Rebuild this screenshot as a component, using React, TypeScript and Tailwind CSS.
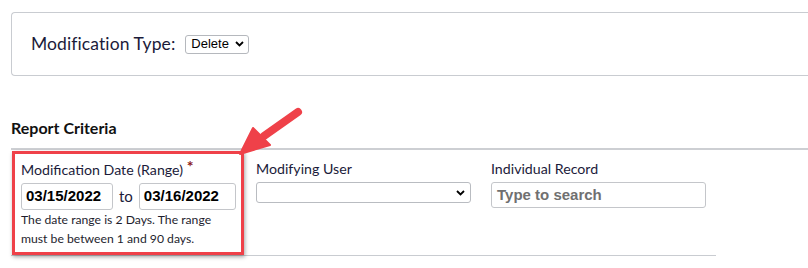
import React from "react";

export default function App() {
  return (
    <div className="relative w-[808px] h-[268px] overflow-hidden bg-white font-['Source_Sans_Pro','Lato','Noto_Sans',sans-serif] text-[#1b1b3a]">
      <div className="pt-[12px] pl-[11px]">
        <div className="flex h-[64px] items-center rounded-l-[4px] border border-r-0 border-[#c9ccd1] pl-[19px]">
          <span className="text-[17.5px] tracking-[0.1px]">Modification Type:</span>
          <div className="ml-[10px] flex h-[19px] items-center rounded-[3px] border border-[#b5b8bd] pl-[5px] pr-[4px] font-['Liberation_Sans',Arial,sans-serif] text-[13px] text-black">
            Delete
            <svg className="ml-[6px]" width="9" height="6" viewBox="0 0 9 6">
              <path d="M1 1 L4.5 4.5 L8 1" stroke="black" strokeWidth="1.8" fill="none" />
            </svg>
          </div>
        </div>
      </div>

      <div className="mt-[42px] pl-[11px] text-[16px] font-bold leading-[20px] text-[#111]">Report Criteria</div>

      <div className="ml-[11px] mt-[10px] border-t-2 border-[#cdcfd3]" />

      <div className="relative ml-[11px] grid h-[106px] w-[705px] grid-cols-[245px_235px_225px] border-b border-[#c9ccd1] pt-[10px]">
        <div className="pl-[10px]">
          <div className="text-[14.2px] leading-[18px]">
            Modification Date (Range){" "}
            <span className="relative top-[-3px] text-[16px] font-bold text-[#8b1a1a]">*</span>
          </div>
          <div className="mt-[4px] flex items-center">
            <div className="flex h-[27px] w-[92px] items-center rounded-[3px] border border-[#c4c6ca] pl-[4px] font-['Liberation_Sans',Arial,sans-serif] text-[15px] font-bold text-black">
              03/15/2022
            </div>
            <span className="mx-[6px] text-[15px]">to</span>
            <div className="flex h-[27px] w-[97px] items-center rounded-[3px] border border-[#c4c6ca] pl-[4px] font-['Liberation_Sans',Arial,sans-serif] text-[15px] font-bold text-black">
              03/16/2022
            </div>
          </div>
          <div className="w-[200px] text-[12.2px] leading-[19px] text-[#1e1e2e]">
            The date range is 2 Days. The range must be between 1 and 90 days.
          </div>
        </div>

        <div>
          <div className="text-[14.2px] leading-[18px]">Modifying User</div>
          <div className="mt-[4px] flex h-[21px] w-[215px] items-center justify-end rounded-[3px] border border-[#b9bcc1] pr-[5px]">
            <svg width="9" height="6" viewBox="0 0 9 6">
              <path d="M1 1 L4.5 4.5 L8 1" stroke="black" strokeWidth="1.8" fill="none" />
            </svg>
          </div>
        </div>

        <div>
          <div className="text-[14.2px] leading-[18px]">Individual Record</div>
          <div className="mt-[4px] flex h-[26px] w-[215px] items-center rounded-[3px] border border-[#c4c6ca] pl-[5px] font-['Liberation_Sans',Arial,sans-serif] text-[15px] font-bold text-[#707070]">
            Type to search
          </div>
        </div>

        <div className="absolute left-[1px] top-[1px] h-[104px] w-[232px] border-[3px] border-[#ef4149] shadow-[1px_2px_4px_rgba(0,0,0,0.35)]" />
      </div>

      <svg className="absolute left-[230px] top-[100px]" width="80" height="65" viewBox="0 0 80 65">
        <line x1="68" y1="12" x2="34" y2="36" stroke="#ef4149" strokeWidth="8" strokeLinecap="round" />
        <polygon points="10,54 23,28 40,45" fill="#ef4149" stroke="#ef4149" strokeWidth="2" strokeLinejoin="round" />
      </svg>
    </div>
  );
}
